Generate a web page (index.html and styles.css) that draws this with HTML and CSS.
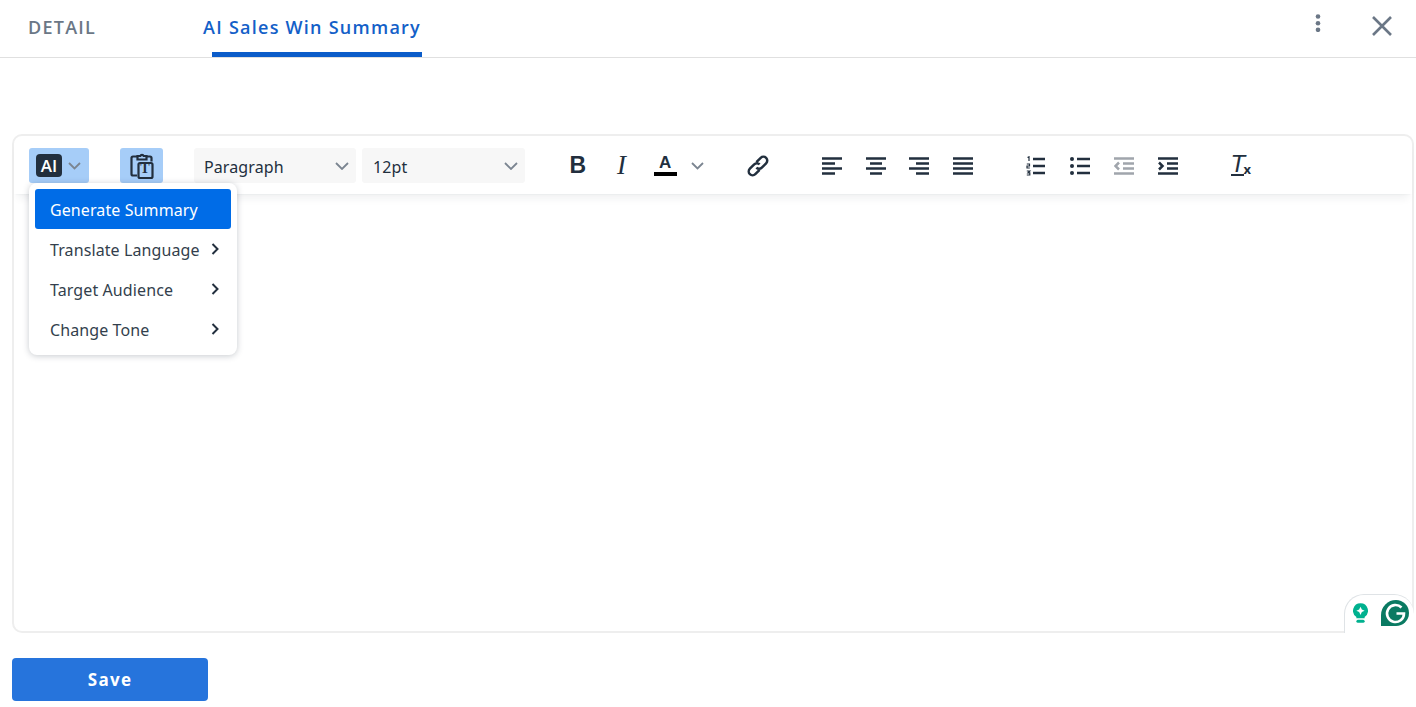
FILE: index.html
```html
<!DOCTYPE html>
<html lang="en">
<head>
<meta charset="utf-8">
<title>AI Sales Win Summary</title>
<link rel="stylesheet" href="styles.css">
</head>
<body>
<header class="tabs">
  <div class="tab">DETAIL</div>
  <div class="tab tab-active">AI Sales Win Summary</div>
  <div class="tab-actions">
    <svg class="kebab" width="6" height="18" viewBox="0 0 6 18"><circle cx="3" cy="2.500" r="2.300"/><circle cx="3" cy="9.200" r="2.300"/><circle cx="3" cy="15.800" r="2.300"/></svg>
    <svg class="close" width="22" height="22" viewBox="0 0 22 22"><path d="M2 2 20 20M20 2 2 20"/></svg>
  </div>
</header>

<main class="editor">
  <div class="toolbar">
    <button class="tb-ai"><span class="ai-badge">AI</span>
      <svg class="chev" width="13" height="8" viewBox="0 0 13 8"><path d="M1 1 6.500 6.500 12 1"/></svg>
    </button>
    <button class="tb-clip">
      <svg width="24" height="28" viewBox="0 0 24 28" class="clip"><path d="M7 4.500H3a1.500 1.500 0 0 0-1.500 1.500V22a1.500 1.500 0 0 0 1.500 1.500H7M17 4.500h3A1.500 1.500 0 0 1 21.500 6V9.500"/><path d="M7.500 7.500V4h2.800a1.800 1.800 0 0 1 3.400 0h2.800v3.500z"/><rect x="8.500" y="11" width="14" height="15" rx="1.500"/></svg>
      <span class="clip-t">T</span>
    </button>
    <div class="select select-para"><span>Paragraph</span><svg class="chev" width="14" height="8" viewBox="0 0 14 8"><path d="M1 1 7 7 13 1"/></svg></div>
    <div class="select select-size"><span>12pt</span><svg class="chev" width="14" height="8" viewBox="0 0 14 8"><path d="M1 1 7 7 13 1"/></svg></div>

    <div class="group group-format">
      <span class="btn glyph-b">B</span>
      <span class="btn glyph-i">I</span>
      <span class="btn glyph-color"><span class="color-a">A</span><span class="color-bar"></span></span>
      <span class="color-chev"><svg class="chev" width="13" height="8" viewBox="0 0 13 8"><path d="M1 1 6.500 6.500 12 1"/></svg></span>
    </div>
    <div class="group group-link">
      <span class="btn"><svg class="ico ico-link" width="26" height="26" viewBox="0 0 24 24"><path d="M10.500 8.500 14.500 4.500a3.500 3.500 0 0 1 5 5l-4 4a3.500 3.500 0 0 1-5 0M13.500 15.500l-4 4a3.500 3.500 0 0 1-5-5l4-4a3.500 3.500 0 0 1 5 0" /></svg></span>
    </div>
    <div class="group group-align">
      <span class="btn"><svg class="ico" width="20" height="18" viewBox="0 0 20 18"><path d="M0 1.500H20M0 6.500H13M0 11.500H20M0 16.500H13"/></svg></span>
      <span class="btn"><svg class="ico" width="20" height="18" viewBox="0 0 20 18"><path d="M0 1.500H20M4 6.500H16M0 11.500H20M4 16.500H16"/></svg></span>
      <span class="btn"><svg class="ico" width="20" height="18" viewBox="0 0 20 18"><path d="M0 1.500H20M7 6.500H20M0 11.500H20M7 16.500H20"/></svg></span>
      <span class="btn"><svg class="ico" width="20" height="18" viewBox="0 0 20 18"><path d="M0 1.500H20M0 6.500H20M0 11.500H20M0 16.500H20"/></svg></span>
    </div>
    <div class="group group-list">
      <span class="btn"><svg class="ico" width="20" height="20" viewBox="0 0 20 20"><path d="M7 3H19M7 10H19M7 17H19"/><path class="thin" d="M1.500 1.500 3 .8V5M.8 8H3.500V10H1V12H3.800M.8 15H3.800L2 16.800H3.800V19H.8"/></svg></span>
      <span class="btn"><svg class="ico" width="20" height="20" viewBox="0 0 20 20"><path d="M7 3H20M7 10H20M7 17H20"/><circle class="dot" cx="2" cy="3" r="2"/><circle class="dot" cx="2" cy="10" r="2"/><circle class="dot" cx="2" cy="17" r="2"/></svg></span>
      <span class="btn"><svg class="ico ico-muted" width="20" height="18" viewBox="0 0 20 18"><path d="M0 1.500H20M9 6.500H20M9 11.500H20M0 16.500H20M5 5.500 1.500 9 5 12.500"/></svg></span>
      <span class="btn"><svg class="ico" width="20" height="18" viewBox="0 0 20 18"><path d="M0 1.500H20M9 6.500H20M9 11.500H20M0 16.500H20M1 5.500 4.500 9 1 12.500"/></svg></span>
    </div>
    <div class="group group-clear">
      <span class="btn glyph-clear"><span class="clear-t">T</span><span class="clear-x">x</span><span class="clear-bar"></span></span>
    </div>
  </div>

  <ul class="menu">
    <li class="menu-item menu-item-active">Generate Summary</li>
    <li class="menu-item">Translate Language<svg class="menu-chev" width="8" height="12" viewBox="0 0 8 12"><path d="M1.500 1 6.500 6 1.500 11"/></svg></li>
    <li class="menu-item">Target Audience<svg class="menu-chev" width="8" height="12" viewBox="0 0 8 12"><path d="M1.500 1 6.500 6 1.500 11"/></svg></li>
    <li class="menu-item">Change Tone<svg class="menu-chev" width="8" height="12" viewBox="0 0 8 12"><path d="M1.500 1 6.500 6 1.500 11"/></svg></li>
  </ul>

  <div class="grammarly">
    <svg class="g-bulb-svg" width="15" height="20" viewBox="0 0 20 26"><path class="g-bulb" d="M10 0a10 10 0 0 0-5.500 18.300V20h11v-1.700A10 10 0 0 0 10 0z"/><path class="g-star" d="M10 4.500 11.800 8.200 15.500 10 11.800 11.800 10 15.500 8.200 11.800 4.500 10 8.200 8.200z"/><rect class="g-bulb" x="4.500" y="22" width="11" height="4" rx="2"/></svg>
    <svg width="28" height="26" viewBox="0 0 28 26"><path class="g-mark" d="M15 0a13 13 0 0 1 0 26H0V15A15 15 0 0 1 15 0z"/><path class="g-letter" d="M20.500 7.500A8.500 8.500 0 1 0 23 13.500H15.500"/></svg>
  </div>
</main>

<button class="save">Save</button>
</body>
</html>
```

FILE: styles.css
```css
* { box-sizing: border-box; }
html, body { margin: 0; padding: 0; }
body { background: #fff; height: 707px; overflow: hidden; font-family: "Open Sans", sans-serif; color: #222f3e; }

.tabs { display: flex; height: 58px; border-bottom: 1px solid #e0e0e0; padding-left: 28px; }
.tab { font-size: 18px; font-weight: 600; letter-spacing: 1.250px; color: #6b7786; line-height: 54px; white-space: nowrap; }
.tab-active { position: relative; margin-left: 107px; color: #1360c8; }
.tab-active::after { content: ""; position: absolute; left: 9px; right: -1px; bottom: 0; height: 5px; background: #0b5cc9; }
.tab-actions { margin-left: auto; display: flex; align-items: flex-start; padding: 12px 23.500px 0 0; gap: 50px; }
.kebab { fill: #6b7786; margin-top: 2px; }
.close { stroke: #6b7786; stroke-width: 2.600; fill: none; margin-top: 3px; }

.editor { position: relative; margin: 76px 2px 0 12px; height: 499px; border: 2px solid #eeeeee; border-radius: 10px; }
.toolbar { display: flex; align-items: center; height: 58px; padding: 1px 0 0 15px; box-shadow: 0 2px 2px -2px rgba(34,47,62,.1), 0 8px 8px -4px rgba(34,47,62,.07); border-radius: 8px 8px 0 0; font-family: "Noto Sans", sans-serif; }
.toolbar button { border: 0; padding: 0; font: inherit; color: inherit; }

.tb-ai { display: flex; align-items: center; width: 60px; height: 35px; background: #a6cdf8; border-radius: 3px; padding-left: 7px !important; gap: 6px; }
.ai-badge { display: block; width: 26px; height: 23px; background: #222f3e; border-radius: 4px; color: #fff; font: 600 17px/23px "Open Sans", sans-serif; text-align: center; }
.chev { stroke: #7b8591; stroke-width: 1.800; fill: none; flex: none; }

.tb-clip { position: relative; width: 43px; height: 35px; margin-left: 31px; background: #a6cdf8; border-radius: 3px; display: flex; align-items: center; justify-content: center; }
.clip { fill: none; stroke: #222f3e; stroke-width: 2.200; }
.clip-t { position: absolute; left: 18px; top: 12px; font: 700 14px/18px "Liberation Serif", serif; width: 14px; text-align: center; }

.select { display: flex; align-items: center; justify-content: space-between; height: 35px; background: #f7f7f7; border-radius: 3px; font-size: 16px; letter-spacing: .1px; padding: 0 7px 0 10px; }
.select span { position: relative; top: 1px; }
.select-para { width: 162px; margin-left: 31px; }
.select-size { width: 163px; margin-left: 6px; padding-left: 11px; }

.group { display: flex; align-items: center; height: 35px; }
.btn { display: flex; align-items: center; justify-content: center; width: 43.700px; height: 35px; position: relative; }
.group-format { margin-left: 31px; }
.group-link { margin-left: 29px; }
.group-align { margin-left: 30.500px; }
.group-list { margin-left: 28.500px; }
.group-list .btn { width: 44px; }
.group-clear { margin-left: 29px; }

.glyph-b { font: 700 23px/1 "Liberation Sans", sans-serif; }
.glyph-i { font: italic 400 27px/1 "Liberation Serif", serif; }
.glyph-color { flex-direction: column; }
.color-a { font: 700 17px/15px "Liberation Sans", sans-serif; }
.color-bar { width: 23px; height: 4px; background: #000; margin-top: 2px; }
.color-chev { display: flex; width: 20px; justify-content: center; }

.ico { stroke: #222f3e; stroke-width: 2.500; fill: none; }
.ico-link { stroke-width: 2.300; }
.ico .thin { stroke-width: 1.200; }
.ico .dot { fill: #222f3e; stroke: none; }
.ico-muted { stroke: #a0a5ac; }

.clear-t { position: absolute; left: 12px; top: 3px; font: italic 400 24px/26px "Liberation Sans", sans-serif; }
.clear-x { position: absolute; left: 25px; top: 14px; font: 700 13px/14px "Open Sans", sans-serif; }
.clear-bar { position: absolute; left: 12px; top: 26px; width: 13px; height: 2px; background: #222f3e; }

.menu { position: absolute; left: 15px; top: 47px; width: 208px; height: 172px; margin: 0; padding: 6px; list-style: none; background: #fff; border-radius: 8px; box-shadow: 0 1px 6px rgba(34,47,62,.25); font-family: "Noto Sans", sans-serif; z-index: 2; }
.menu-item { position: relative; display: flex; align-items: center; height: 40px; padding: 1px 0 0 15px; font-size: 16px; letter-spacing: .1px; color: #333f4d; border-radius: 3px; white-space: nowrap; }
.menu-item-active { background: #006ce7; color: #fff; }
.menu-chev { position: absolute; left: 176px; top: 14px; stroke: #222f3e; stroke-width: 2; fill: none; }

.grammarly { position: absolute; right: -2px; bottom: -2px; width: 70px; height: 39px; display: flex; align-items: flex-start; gap: 13px; padding: 5px 0 0 8px; background: #fff; border: 1px solid #dfe3e6; border-right: 0; border-bottom: 0; border-radius: 20px 20px 0 0; }
.g-bulb-svg { margin-top: 3px; flex: none; }
.g-bulb { fill: #00b18f; }
.g-star { fill: #fff; }
.g-mark { fill: #0a7a62; }
.g-letter { fill: none; stroke: #fff; stroke-width: 2.600; }

.save { display: block; width: 196px; height: 43px; margin: 25px 0 0 12px; border: 0; border-radius: 4px; background: #2674dc; color: #fff; font: 700 17px/1 "Open Sans", sans-serif; letter-spacing: 1.300px; }
```
